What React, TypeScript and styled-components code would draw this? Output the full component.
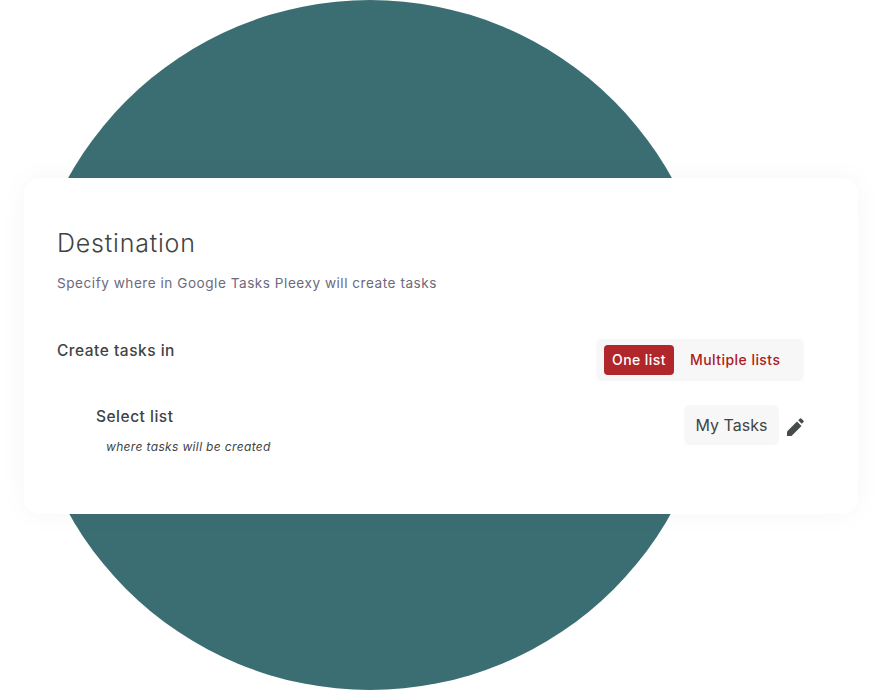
import React from "react";
import styled, { createGlobalStyle } from "styled-components";

const Global = createGlobalStyle`
  html, body { margin: 0; padding: 0; background: #fff; }
  body { font-family: Inter, "Open Sans", sans-serif; }
`;

const Stage = styled.div`
  position: relative;
  width: 883px;
  height: 691px;
  overflow: hidden;
  padding: 178px 0 0 24px;
  box-sizing: border-box;
`;

const Circle = styled.div`
  position: absolute;
  left: 25px;
  top: 0;
  width: 690px;
  height: 690px;
  border-radius: 50%;
  background: #3b6e73;
`;

const Card = styled.section`
  position: relative;
  width: 834px;
  height: 336px;
  box-sizing: border-box;
  padding: 49px 54px 0 33px;
  background: #fff;
  border-radius: 16px;
  box-shadow: 0 0 28px rgba(0, 0, 0, 0.04);
`;

const Title = styled.h2`
  margin: 0;
  font-size: 25px;
  line-height: 32px;
  font-weight: 300;
  letter-spacing: 0.8px;
  color: #3f4443;
`;

const Subtitle = styled.p`
  margin: 14px 0 0;
  font-size: 13.6px;
  line-height: 20px;
  font-weight: 400;
  letter-spacing: 0.52px;
  color: #6c6a7c;
`;

const Row = styled.div<{ $indent?: number; $top: number }>`
  display: flex;
  justify-content: space-between;
  align-items: flex-start;
  margin-top: ${(p) => p.$top}px;
  padding-left: ${(p) => p.$indent ?? 0}px;
`;

const Label = styled.div`
  font-size: 15.5px;
  line-height: 20px;
  font-weight: 450;
  letter-spacing: 0.5px;
  color: #3f4443;
  padding-top: 2px;
`;

const Hint = styled.div`
  margin: 11px 0 0 10px;
  font-size: 12px;
  line-height: 18px;
  font-style: italic;
  letter-spacing: 0.35px;
  color: #3f4443;
`;

const Toggle = styled.div`
  display: flex;
  align-items: center;
  box-sizing: border-box;
  width: 208px;
  height: 42px;
  padding: 0 8px;
  gap: 16px;
  background: #f7f7f7;
  border-radius: 6px;
`;

const ToggleOption = styled.button<{ $active?: boolean }>`
  border: 0;
  height: 30px;
  width: ${(p) => (p.$active ? "70px" : "auto")};
  padding: 0 0 2px;
  border-radius: 4px;
  font: 450 14px Inter, sans-serif;
  letter-spacing: 0.45px;
  background: ${(p) => (p.$active ? "#b0262a" : "transparent")};
  color: ${(p) => (p.$active ? "#fff" : "#ae1c20")};
`;

const Picker = styled.div`
  display: flex;
  align-items: center;
  gap: 8px;
`;

const Value = styled.div`
  box-sizing: border-box;
  height: 40px;
  width: 95px;
  display: flex;
  align-items: center;
  justify-content: center;
  background: #f7f7f7;
  border-radius: 6px;
  font-size: 16px;
  font-weight: 400;
  color: #3f4443;
`;

const PencilIcon = styled.svg`
  width: 17px;
  height: 18px;
  margin-top: 4px;
  fill: #454b4a;
`;

const Pencil = () => (
  <PencilIcon viewBox="0 0 17 18" aria-hidden="true">
    <path d="M0 18v-4.5L10 3.5 14.5 8l-10 10H0z" />
    <path d="M11.2 2.3l1.6-1.6a1.2 1.2 0 0 1 1.7 0l1.8 1.8a1.2 1.2 0 0 1 0 1.7l-1.6 1.6-3.5-3.5z" />
  </PencilIcon>
);

export default function App() {
  return (
    <Stage>
      <Global />
      <Circle />
      <Card>
        <Title>Destination</Title>
        <Subtitle>Specify where in Google Tasks Pleexy will create tasks</Subtitle>
        <Row $top={46}>
          <Label>Create tasks in</Label>
          <Toggle>
            <ToggleOption $active>One list</ToggleOption>
            <ToggleOption>Multiple lists</ToggleOption>
          </Toggle>
        </Row>
        <Row $top={24} $indent={39}>
          <div>
            <Label>Select list</Label>
            <Hint>where tasks will be created</Hint>
          </div>
          <Picker>
            <Value>My Tasks</Value>
            <Pencil />
          </Picker>
        </Row>
      </Card>
    </Stage>
  );
}
